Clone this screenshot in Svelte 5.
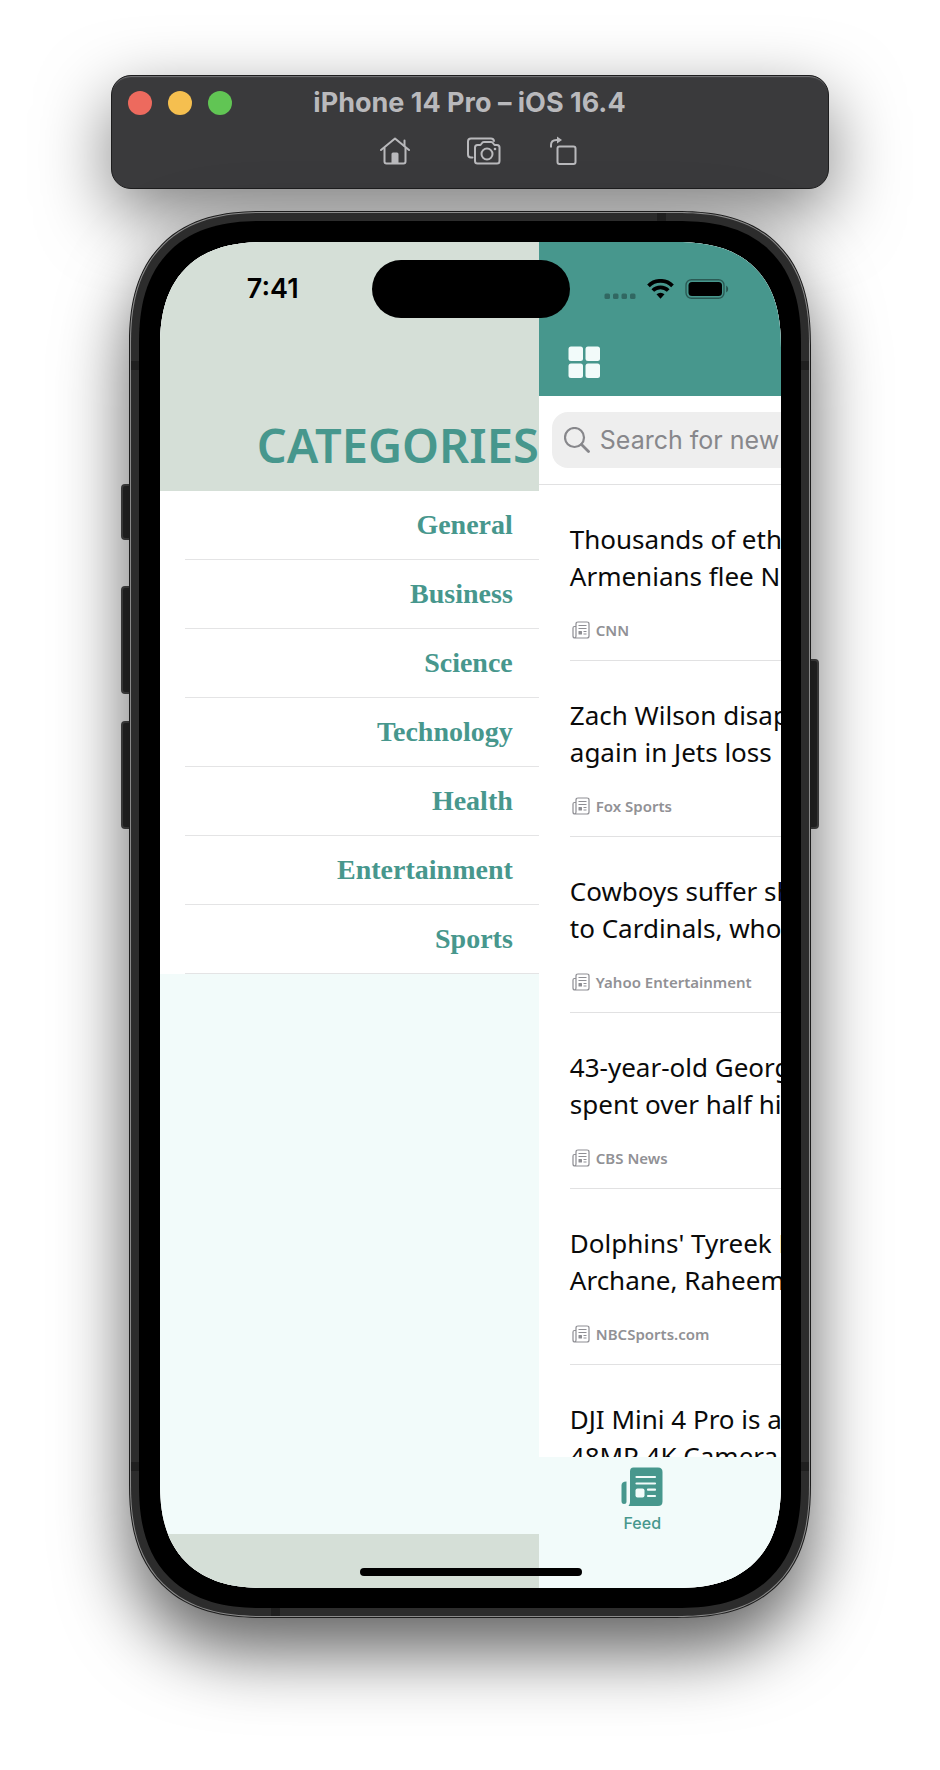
<script>
  const categories = ['General', 'Business', 'Science', 'Technology', 'Health', 'Entertainment', 'Sports'];

  const articles = [
    { lines: ['Thousands of eth', 'Armenians flee N'], source: 'CNN' },
    { lines: ['Zach Wilson disap', 'again in Jets loss'], source: 'Fox Sports' },
    { lines: ['Cowboys suffer sh', 'to Cardinals, who'], source: 'Yahoo Entertainment' },
    { lines: ['43-year-old Georg', 'spent over half hi'], source: 'CBS News' },
    { lines: ["Dolphins' Tyreek H", 'Archane, Raheem'], source: 'NBCSports.com' },
    { lines: ['DJI Mini 4 Pro is a', '48MP 4K Camera'], source: '' }
  ];
</script>

<main class="stage">
  <header class="titlebar">
    <div class="title-row">
      <div class="lights">
        <button class="light close" aria-label="Close"></button>
        <button class="light minimize" aria-label="Minimize"></button>
        <button class="light zoom" aria-label="Zoom"></button>
      </div>
      <h1>iPhone 14 Pro – iOS 16.4</h1>
    </div>
    <div class="tools">
      <button class="home" aria-label="Home">
        <svg width="30" height="28" viewBox="0 0 30 28" fill="none" stroke="currentColor" stroke-width="2" stroke-linecap="round" stroke-linejoin="round">
          <path d="M1 13 15 1.500 29 13" />
          <path d="M4.500 11v13.500q0 2 2 2h17q2 0 2-2V11M24.500 9V3.500" />
          <path d="M11.500 26V17q0-1.500 1.500-1.500h4q1.500 0 1.500 1.500v9z" fill="currentColor" stroke="none" />
        </svg>
      </button>
      <button aria-label="Screenshot">
        <svg width="34" height="28" viewBox="0 0 34 28" fill="none" stroke="currentColor" stroke-width="2" stroke-linejoin="round" stroke-linecap="round">
          <path d="M5.500 20.500H4q-3 0-3-3V4.500q0-3 3-3h20q2.500 0 3 2.500" />
          <path d="M10.500 8h3l2-2.500q.5-.5 1.500-.5h7q1 0 1.500.5l2 2.500h2.500q2.500 0 2.500 2.500V24q0 2.500-2.500 2.500H10.500Q8 26.500 8 24V10.500Q8 8 10.500 8z" />
          <circle cx="20" cy="17" r="5.500" />
          <circle cx="28" cy="12" r="1.300" fill="currentColor" stroke="none" />
        </svg>
      </button>
      <button aria-label="Rotate">
        <svg width="27" height="29" viewBox="0 0 27 29" fill="none" stroke="currentColor" stroke-width="2" stroke-linejoin="round">
          <rect x="7.500" y="10.500" width="18" height="17.500" rx="2" />
          <path d="M1 11.500V9q0-5 5.500-5H8" />
          <path d="M7 .5 12 4 7 7.500z" fill="currentColor" stroke="none" />
        </svg>
      </button>
    </div>
  </header>

  <section class="phone">
    <span class="key mute"></span>
    <span class="key volume-up"></span>
    <span class="key volume-down"></span>
    <span class="key power"></span>
    <div class="rim">
      <div class="band">
        <i class="seam top"></i><i class="seam bottom"></i>
        <i class="seam left-top"></i><i class="seam left-bottom"></i>
        <i class="seam right-top"></i><i class="seam right-bottom"></i>
        <div class="bezel">
          <div class="screen">
            <aside class="drawer">
              <h2>CATEGORIES</h2>
              <ul>
                {#each categories as category}
                  <li><button>{category}</button></li>
                {/each}
              </ul>
              <div class="drawer-foot"></div>
            </aside>

            <div class="feed">
              <div class="navbar">
                <button aria-label="Menu">
                  <svg width="32" height="32" viewBox="0 0 32 32" fill="#f2fbfa">
                    <rect x="0.500" y="0.500" width="14.500" height="14.500" rx="2.500" />
                    <rect x="17.500" y="0.500" width="14.500" height="14.500" rx="2.500" />
                    <rect x="0.500" y="17.500" width="14.500" height="14.500" rx="2.500" />
                    <rect x="17.500" y="17.500" width="14.500" height="14.500" rx="2.500" />
                  </svg>
                </button>
              </div>
              <div class="search">
                <label>
                  <svg width="26" height="26" viewBox="0 0 26 26" fill="none" stroke="#87878b" stroke-width="2.200" stroke-linecap="round">
                    <circle cx="10.500" cy="10.500" r="9.500" />
                    <path d="m17.500 17.500 7 7" stroke-width="2.800" />
                  </svg>
                  <input type="text" placeholder="Search for new" aria-label="Search" />
                </label>
              </div>
              <div class="list">
                {#each articles as article}
                  <article>
                    <h3>{article.lines[0]}<br />{article.lines[1]}</h3>
                    <p>
                      <svg width="18" height="18" viewBox="0 0 18 18" fill="none" stroke="#8e8e93" stroke-width="1.200">
                        <path d="M4 5.500H2.500q-1.500 0-1.500 1.500v8q0 2 2 2h12q2 0 2-2V3q0-2-2-2H6Q4 1 4 3v12q0 2-1.500 2" />
                        <path d="M6.500 4.500h8M6.500 7.500h8M11.500 10.500h3M11.500 13h3" />
                        <rect x="6.500" y="10" width="3.500" height="3.500" rx="0.500" fill="#8e8e93" stroke="none" />
                      </svg>
                      {article.source}
                    </p>
                  </article>
                {/each}
              </div>
              <nav>
                <button class="tab">
                  <svg width="42" height="40" viewBox="0 0 42 40">
                    <path d="M12.500 0.500h24.500q4.500 0 4.500 4.500v29.500q0 4.500-4.500 4.500H7.500Q9 37.500 9 35V4.500q0-4 3.500-4z" fill="#47978d" />
                    <path d="M5.500 14.500v20Q5.500 37 3 37T.5 34V18.500q0-4 5-4z" fill="#47978d" />
                    <path d="M15.500 10H34M15.500 16.500H34M27 22.700h7M27 29h7" stroke="#f2fbfa" stroke-width="2.200" stroke-linecap="round" />
                    <rect x="14.500" y="21.500" width="9" height="9" rx="2" fill="#f2fbfa" />
                  </svg>
                  Feed
                </button>
              </nav>
            </div>

            <div class="status">
              <time>7:41</time>
              <div class="island"></div>
              <div class="signals">
                <svg width="32" height="20" viewBox="0 0 32 20" fill="#000" opacity="0.3">
                  <rect x="0.500" y="14.500" width="5.500" height="5.500" rx="1.500" />
                  <rect x="9" y="14.500" width="5.500" height="5.500" rx="1.500" />
                  <rect x="17.500" y="14.500" width="5.500" height="5.500" rx="1.500" />
                  <rect x="26" y="14.500" width="5.500" height="5.500" rx="1.500" />
                </svg>
                <svg width="27" height="20" viewBox="0 0 27 20" fill="none" stroke="#000" stroke-width="3.800">
                  <path d="M1.500 6.800a17 17 0 0 1 24 0" />
                  <path d="M5.800 11.500a11 11 0 0 1 15.400 0" />
                  <path d="M9.500 15.300a6 6 0 0 1 8 0L13.500 19.700z" fill="#000" stroke="none" />
                </svg>
                <svg width="44" height="20" viewBox="0 0 44 20">
                  <rect x="1" y="0.700" width="38" height="18.600" rx="5.500" fill="none" stroke="#000" stroke-opacity="0.400" stroke-width="1.400" />
                  <rect x="3.500" y="3" width="33.500" height="14" rx="3.500" />
                  <path d="M41.200 6.500q2 1 2 3.500t-2 3.500z" fill-opacity="0.450" />
                </svg>
              </div>
            </div>
            <div class="home-indicator"></div>
          </div>
        </div>
      </div>
    </div>
  </section>
</main>

<style>
  :global(body) {
    margin: 0;
    background: #fff;
  }
  * {
    box-sizing: border-box;
  }
  button {
    border: 0;
    padding: 0;
    background: none;
    color: inherit;
    font: inherit;
    cursor: pointer;
  }
  svg {
    display: block;
    flex: none;
  }
  .stage {
    display: flex;
    flex-direction: column;
    align-items: center;
    gap: 22px;
    padding: 75px 24px 151px;
    overflow: hidden;
    font-family: Inter, "Liberation Sans", sans-serif;
  }

  .titlebar {
    width: 100%;
    max-width: 718px;
    padding: 14px 17px 23px 16px;
    border: 1px solid #1d1d1e;
    border-radius: 20px;
    background: #3a3a3c;
    box-shadow: inset 0 2px 1px -1px #78787a, 0 24px 70px rgb(0 0 0 / 50%);
    color: #b9b9bc;
  }
  .title-row {
    display: grid;
    grid-template-columns: 1fr auto 1fr;
    align-items: center;
    height: 26px;
  }
  .lights {
    display: flex;
    gap: 16px;
  }
  .light {
    width: 24px;
    height: 24px;
    border-radius: 50%;
  }
  .close { background: #ed6a5e; }
  .minimize { background: #f5bf4f; }
  .zoom { background: #61c554; }
  h1 {
    margin: 0;
    font-size: 27px;
    line-height: 26px;
    font-weight: 700;
  }
  .tools {
    display: flex;
    justify-content: center;
    gap: 49px;
    padding-top: 20px;
    padding-left: 18px;
  }
  .home {
    margin-right: 8px;
  }

  .phone {
    position: relative;
    width: 100%;
    max-width: 682px;
  }
  .rim, .band, .bezel, .screen {
    corner-shape: superellipse(1.3);
  }
  .rim {
    padding: 1px;
    border: 1px solid #1c1c1c;
    border-radius: 134px;
    background: #8a8a8a;
    box-shadow: 0 34px 70px rgb(0 0 0 / 62%);
    position: relative;
  }
  .band {
    position: relative;
    padding: 8px;
    border-radius: 132px;
    background: #2c2c2c;
  }
  .bezel {
    position: relative;
    padding: 21px 20px 20px 21px;
    border-radius: 124px;
    background: #000;
  }
  .seam {
    position: absolute;
    width: 9px;
    height: 9px;
    background: #1f1f1f;
  }
  .top { top: 0; right: 143px; }
  .bottom { bottom: 0; left: 140px; }
  .left-top { top: 148px; left: 0; }
  .left-bottom { bottom: 145px; left: 0; }
  .right-top { top: 148px; right: 0; }
  .right-bottom { bottom: 145px; right: 0; }
  .key {
    position: absolute;
    width: 12px;
    border: 2px solid #4b4b4b;
    border-radius: 4px;
    background: #2a2a2a;
  }
  .mute { left: -8px; top: 273px; height: 56px; }
  .volume-up { left: -8px; top: 375px; height: 108px; }
  .volume-down { left: -8px; top: 510px; height: 108px; }
  .power { right: -8px; top: 448px; height: 170px; }

  .screen {
    position: relative;
    display: grid;
    grid-template-columns: 61fr 39fr;
    grid-template-rows: minmax(0, 1fr);
    aspect-ratio: 621 / 1346;
    border-radius: 106px;
    overflow: hidden;
    background: #fff;
  }
  .drawer {
    display: flex;
    flex-direction: column;
    min-width: 0;
    background: #f2fbfa;
    color: #47978d;
  }
  h2 {
    display: flex;
    align-items: flex-end;
    justify-content: flex-end;
    height: 249px;
    margin: 0;
    padding-bottom: 14px;
    background: #d5dfd7;
    font-family: "Noto Sans", sans-serif;
    font-size: 47px;
    line-height: 64px;
    font-weight: 600;
  }
  ul {
    margin: 0;
    padding: 0 0 0 25px;
    list-style: none;
    background: #fff;
  }
  li {
    border-bottom: 1px solid #e4e4e5;
  }
  li button {
    display: block;
    width: 100%;
    height: 68px;
    padding-right: 26px;
    text-align: right;
    font-family: "Liberation Serif", serif;
    font-size: 28px;
    font-weight: 700;
  }
  .drawer-foot {
    height: 54px;
    margin-top: auto;
    background: #d5dfd7;
  }

  .feed {
    display: flex;
    flex-direction: column;
    min-width: 0;
    overflow: hidden;
    background: #fff;
  }
  .navbar {
    display: flex;
    flex: none;
    align-items: flex-end;
    height: 154px;
    padding: 0 0 18px 29px;
    background: #47978d;
  }
  .search {
    flex: none;
    padding: 16px 0 16px 13px;
    border-bottom: 1px solid #e1e1e2;
  }
  label {
    display: flex;
    align-items: center;
    gap: 10px;
    height: 56px;
    padding-left: 12px;
    border-radius: 16px 0 0 16px;
    background: #eee;
  }
  input {
    flex: 1;
    min-width: 0;
    padding: 0;
    border: 0;
    outline: 0;
    background: none;
    color: #000;
    font: 25px Inter, sans-serif;
  }
  input::placeholder {
    color: #87878b;
    opacity: 1;
  }
  .list {
    flex: 1;
    min-height: 0;
    padding-left: 31px;
    overflow: hidden;
    font-family: "Noto Sans", sans-serif;
  }
  article {
    height: 176px;
    padding-top: 36px;
    border-bottom: 1px solid #e1e1e2;
  }
  h3 {
    margin: 0 0 23px;
    color: #0a0a0a;
    font-size: 26px;
    line-height: 37px;
    font-weight: 400;
    white-space: nowrap;
  }
  p {
    display: flex;
    align-items: center;
    gap: 6px;
    margin: 0;
    padding-left: 2px;
    color: #919195;
    font-size: 15px;
    line-height: 24px;
    font-weight: 600;
    white-space: nowrap;
  }
  nav {
    flex: none;
    height: 131px;
    padding-top: 10px;
    background: #f2fbfa;
  }
  .tab {
    display: flex;
    flex-direction: column;
    align-items: center;
    gap: 6px;
    width: 207px;
    color: #47978d;
    font-size: 16px;
    line-height: 20px;
    font-weight: 500;
  }

  .status {
    position: absolute;
    inset: 18px 0 auto;
    display: grid;
    grid-template-columns: 1fr 198px 1fr;
    align-items: center;
  }
  time {
    padding-left: 14px;
    text-align: center;
    font-size: 27px;
    line-height: 32px;
    font-weight: 600;
  }
  .island {
    height: 58px;
    border-radius: 29px;
    background: #000;
  }
  .signals {
    display: flex;
    justify-content: center;
    gap: 11px;
    padding-right: 17px;
  }
  .home-indicator {
    position: absolute;
    bottom: 12px;
    left: 50%;
    width: 222px;
    height: 8px;
    margin-left: -111px;
    border-radius: 4px;
    background: #000;
  }
</style>
